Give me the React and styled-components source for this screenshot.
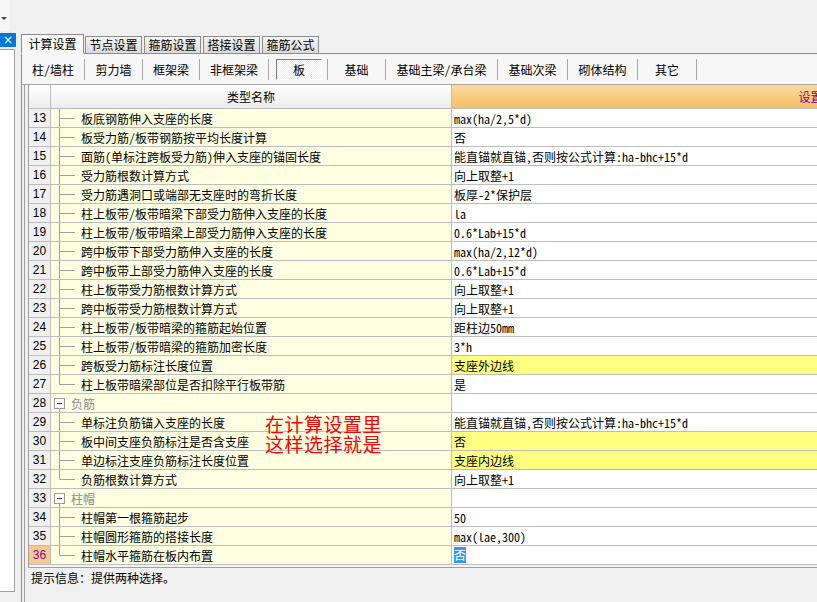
import React from "react";
import styled, { createGlobalStyle } from "styled-components";

const FONT = `"Noto Sans Mono CJK SC", "Noto Sans CJK SC", "Liberation Sans", sans-serif`;

const Global = createGlobalStyle`
  html, body { margin: 0; padding: 0; background: #f0f0f0; }
  body { font-family: ${FONT}; font-size: 12px; color: #000; overflow: hidden; }
  #root { width: 817px; height: 602px; }
`;

const Window = styled.div`
  display: flex;
  width: 817px;
  height: 602px;
  overflow: hidden;
`;

const SidePane = styled.div`
  width: 16px;
  flex: none;
  display: flex;
  flex-direction: column;
`;

const ComboStub = styled.div`
  width: 10px;
  height: 31px;
  background: #f6f6f6;
  display: flex;
  align-items: flex-start;
  padding-top: 17px;
  box-sizing: border-box;
`;

const Caret = styled.span`
  width: 0;
  height: 0;
  margin-left: 1px;
  border-left: 3px solid transparent;
  border-right: 3px solid transparent;
  border-top: 3px solid #444;
`;

const PaneTitle = styled.div`
  margin-top: 2px;
  height: 14px;
  background: #0078d7;
  color: #fff;
  font-family: "DejaVu Sans", sans-serif;
  font-size: 12px;
  line-height: 14px;
  text-align: center;
`;

const PaneList = styled.div`
  flex: 1;
  width: 15px;
  margin: 2px 0 10px;
  background: #fff;
  border: 1px solid #a0a0a0;
  border-left: none;
  box-sizing: border-box;
`;

const Splitter = styled.div`
  width: 5px;
  flex: none;
`;

const Main = styled.div`
  flex: 1;
  min-width: 0;
  display: flex;
  flex-direction: column;
  padding-top: 33px;
  overflow: hidden;
`;

const TabStrip = styled.div`
  display: flex;
  align-items: flex-end;
  gap: 2px;
  height: 20px;
  position: relative;
  z-index: 1;
`;

const Tab = styled.div`
  box-sizing: border-box;
  width: ${(p) => (p.$active ? 63 : 57)}px;
  height: ${(p) => (p.$active ? 20 : 17)}px;
  margin-right: ${(p) => (p.$active ? -1 : 0)}px;
  border: 1px solid #8c8c8c;
  border-bottom: ${(p) => (p.$active ? "1px solid #f7f7f7" : "none")};
  background: ${(p) =>
    p.$active ? "#f7f7f7" : "linear-gradient(#f3f3f3, #dadada)"};
  display: flex;
  align-items: center;
  justify-content: center;
  font-size: 12px;
  line-height: 14px;
  margin-bottom: ${(p) => (p.$active ? -1 : 0)}px;
  white-space: nowrap;
`;

const TabPanel = styled.div`
  flex: 1;
  display: flex;
  flex-direction: column;
  border-top: 1px solid #8c8c8c;
  border-left: 1px solid #8c8c8c;
  min-height: 0;
`;

const SubBar = styled.div`
  height: 30px;
  display: flex;
  align-items: center;
  background: #f7f7f7;
  border-bottom: 1px solid #a6a6a6;
  flex: none;
`;

const SubItem = styled.div`
  box-sizing: border-box;
  width: ${(p) => p.$w}px;
  height: 21px;
  flex: none;
  border-right: 1px solid #a9a9a9;
  display: flex;
  align-items: center;
  justify-content: center;
  white-space: nowrap;
`;

const PressedButton = styled.div`
  box-sizing: border-box;
  width: 47px;
  height: 21px;
  margin-left: 7px;
  margin-right: 5px;
  border: 1px solid;
  border-color: #7a7a7a #ffffff #ffffff #7a7a7a;
  background: repeating-conic-gradient(#ffffff 0 25%, #ececec 0 50%) 0 0 / 2px 2px;
  display: flex;
  align-items: center;
  justify-content: center;
`;

const ContentArea = styled.div`
  flex: 1;
  display: flex;
  flex-direction: column;
  margin-left: 2px;
  border-left: 1px solid #a0a0a0;
  padding-left: 3px;
  min-height: 0;
`;

const Grid = styled.div`
  border-left: 1px solid #a0a0a0;
  border-bottom: 1px solid #a0a0a0;
  flex: none;
  width: 1200px;
`;

const ROW_COLS = "22px 401px 730px";

const HeaderRow = styled.div`
  display: grid;
  grid-template-columns: ${ROW_COLS};
  height: 24px;
`;

const HeadCell = styled.div`
  box-sizing: border-box;
  border-right: 1px solid #bdbdbd;
  border-bottom: 1px solid #bdbdbd;
  background: ${(p) =>
    p.$accent
      ? "linear-gradient(#fbdba0, #f2bf63)"
      : "linear-gradient(#ffffff, #ececec)"};
  color: ${(p) => (p.$accent ? "#800080" : "#000")};
  display: flex;
  align-items: center;
  justify-content: center;
  white-space: nowrap;
`;

const Body = styled.div`
  position: relative;
  padding-bottom: 2px;
  background: #f4f4f4;
`;

const Row = styled.div`
  display: grid;
  grid-template-columns: ${ROW_COLS};
  height: 19px;
`;

const NumCell = styled.div`
  box-sizing: border-box;
  border-right: 1px solid #bdbdbd;
  border-bottom: 1px solid #bdbdbd;
  background: ${(p) => (p.$current ? "#f8c98e" : "#f0f0f0")};
  color: ${(p) => (p.$current ? "#7b0f8c" : "#000")};
  font-family: "Liberation Sans", sans-serif;
  font-size: 12px;
  display: flex;
  align-items: center;
  justify-content: center;
`;

const NameCell = styled.div`
  box-sizing: border-box;
  border-right: 1px solid #bdbdbd;
  border-bottom: 1px solid #bdbdbd;
  background: #ffffe1;
  display: flex;
  align-items: center;
  white-space: nowrap;
  overflow: hidden;
  color: ${(p) => (p.$group ? "#8c8c8c" : "#000")};
`;

const ValueCell = styled.div`
  box-sizing: border-box;
  border-bottom: 1px solid #bdbdbd;
  background: ${(p) => (p.$hl ? "#ffff80" : "#ffffff")};
  display: flex;
  align-items: center;
  padding-left: 2px;
  white-space: nowrap;
`;

const Selected = styled.span`
  background: #3399ff;
  color: #fff;
  line-height: 16px;
`;

const TreeSvg = styled.svg`
  flex: none;
  display: block;
`;

const Note = styled.div`
  position: absolute;
  left: 236px;
  top: 305px;
  color: #ff0000;
  font-family: "Noto Sans CJK SC", sans-serif;
  font-size: 19px;
  line-height: 20px;
  letter-spacing: 0.5px;
  pointer-events: none;
`;

const Status = styled.div`
  height: 20px;
  line-height: 20px;
  padding-left: 3px;
  white-space: nowrap;
`;

const LINE = "#a0a0a0";

function Branch({ last }) {
  return (
    <TreeSvg width="30" height="18" viewBox="0 0 30 18">
      <line x1="8.5" y1="0" x2="8.5" y2={last ? 9.5 : 18} stroke={LINE} />
      <line x1="8.5" y1="9.5" x2="24" y2="9.5" stroke={LINE} />
    </TreeSvg>
  );
}

function GroupToggle() {
  return (
    <TreeSvg width="20" height="18" viewBox="0 0 20 18">
      <rect x="3.5" y="4.5" width="10" height="10" fill="#fff" stroke="#9c9c9c" />
      <line x1="6" y1="9.5" x2="11" y2="9.5" stroke="#333" />
      <line x1="8.5" y1="15" x2="8.5" y2="18" stroke={LINE} />
    </TreeSvg>
  );
}

const tabs = ["计算设置", "节点设置", "箍筋设置", "搭接设置", "箍筋公式"];

const subItems = [
  { t: "柱/墙柱", w: 63 },
  { t: "剪力墙", w: 58 },
  { t: "框架梁", w: 57 },
  { t: "非框架梁", w: 69 },
  { t: "板", w: 59, pressed: true },
  { t: "基础", w: 58 },
  { t: "基础主梁/承台梁", w: 112 },
  { t: "基础次梁", w: 70 },
  { t: "砌体结构", w: 70 },
  { t: "其它", w: 59 },
];

const rows = [
  { n: 13, name: "板底钢筋伸入支座的长度", v: "max(ha/2,5*d)" },
  { n: 14, name: "板受力筋/板带钢筋按平均长度计算", v: "否" },
  { n: 15, name: "面筋(单标注跨板受力筋)伸入支座的锚固长度", v: "能直锚就直锚,否则按公式计算:ha-bhc+15*d" },
  { n: 16, name: "受力筋根数计算方式", v: "向上取整+1" },
  { n: 17, name: "受力筋遇洞口或端部无支座时的弯折长度", v: "板厚-2*保护层" },
  { n: 18, name: "柱上板带/板带暗梁下部受力筋伸入支座的长度", v: "la" },
  { n: 19, name: "柱上板带/板带暗梁上部受力筋伸入支座的长度", v: "0.6*Lab+15*d" },
  { n: 20, name: "跨中板带下部受力筋伸入支座的长度", v: "max(ha/2,12*d)" },
  { n: 21, name: "跨中板带上部受力筋伸入支座的长度", v: "0.6*Lab+15*d" },
  { n: 22, name: "柱上板带受力筋根数计算方式", v: "向上取整+1" },
  { n: 23, name: "跨中板带受力筋根数计算方式", v: "向上取整+1" },
  { n: 24, name: "柱上板带/板带暗梁的箍筋起始位置", v: "距柱边50mm" },
  { n: 25, name: "柱上板带/板带暗梁的箍筋加密长度", v: "3*h" },
  { n: 26, name: "跨板受力筋标注长度位置", v: "支座外边线", hl: true },
  { n: 27, name: "柱上板带暗梁部位是否扣除平行板带筋", v: "是", last: true },
  { n: 28, name: "负筋", group: true },
  { n: 29, name: "单标注负筋锚入支座的长度", v: "能直锚就直锚,否则按公式计算:ha-bhc+15*d" },
  { n: 30, name: "板中间支座负筋标注是否含支座", v: "否", hl: true },
  { n: 31, name: "单边标注支座负筋标注长度位置", v: "支座内边线", hl: true },
  { n: 32, name: "负筋根数计算方式", v: "向上取整+1", last: true },
  { n: 33, name: "柱帽", group: true },
  { n: 34, name: "柱帽第一根箍筋起步", v: "50" },
  { n: 35, name: "柱帽圆形箍筋的搭接长度", v: "max(lae,300)" },
  { n: 36, name: "柱帽水平箍筋在板内布置", v: "否", last: true, current: true },
];

export default function App() {
  return (
    <>
      <Global />
      <Window>
        <SidePane>
          <ComboStub>
            <Caret />
          </ComboStub>
          <PaneTitle>×</PaneTitle>
          <PaneList />
        </SidePane>
        <Splitter />
        <Main>
          <TabStrip>
            {tabs.map((t, i) => (
              <Tab key={t} $active={i === 0}>
                {t}
              </Tab>
            ))}
          </TabStrip>
          <TabPanel>
            <SubBar>
              {subItems.map((s) => (
                <SubItem key={s.t} $w={s.w}>
                  {s.pressed ? <PressedButton>{s.t}</PressedButton> : s.t}
                </SubItem>
              ))}
            </SubBar>
            <ContentArea>
              <Grid>
                <HeaderRow>
                  <HeadCell />
                  <HeadCell>类型名称</HeadCell>
                  <HeadCell $accent>设置值</HeadCell>
                </HeaderRow>
                <Body>
                  {rows.map((r) => (
                    <Row key={r.n}>
                      <NumCell $current={r.current}>{r.n}</NumCell>
                      <NameCell $group={r.group}>
                        {r.group ? <GroupToggle /> : <Branch last={r.last} />}
                        {r.name}
                      </NameCell>
                      <ValueCell $hl={r.hl}>
                        {r.current ? <Selected>{r.v}</Selected> : r.v}
                      </ValueCell>
                    </Row>
                  ))}
                  <Note>
                    在计算设置里
                    <br />
                    这样选择就是
                  </Note>
                </Body>
              </Grid>
              <Status>提示信息：提供两种选择。</Status>
            </ContentArea>
          </TabPanel>
        </Main>
      </Window>
    </>
  );
}
